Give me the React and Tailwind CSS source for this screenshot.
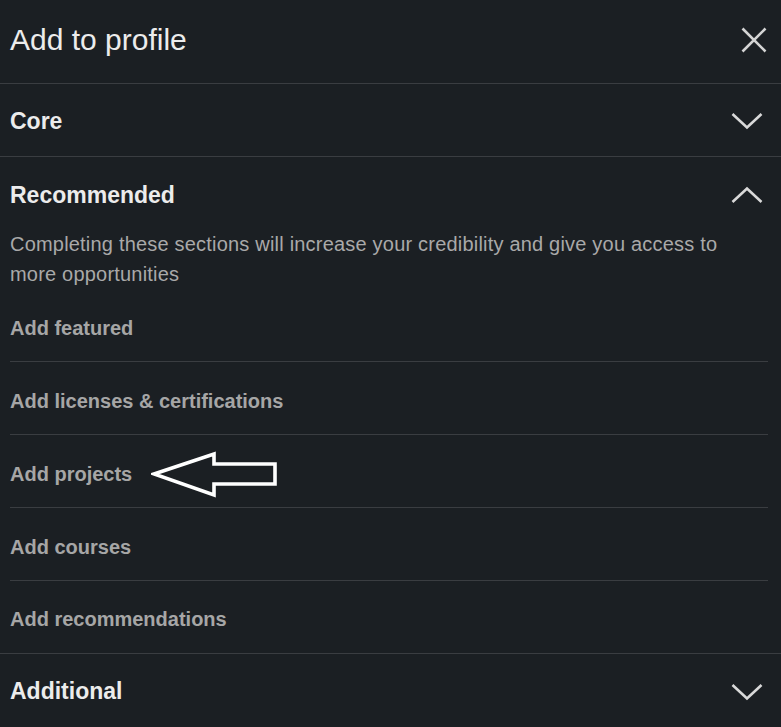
import React from "react";

const items = [
  "Add featured",
  "Add licenses & certifications",
  "Add projects",
  "Add courses",
  "Add recommendations",
];

const ChevronDown = () => (
  <svg width="32" height="18" viewBox="0 0 32 18" fill="none" stroke="#d9d9d9" strokeWidth="2.6">
    <path d="M1.5 2 L16 15.5 L30.5 2" />
  </svg>
);

const ChevronUp = () => (
  <svg width="32" height="18" viewBox="0 0 32 18" fill="none" stroke="#d9d9d9" strokeWidth="2.6">
    <path d="M1.5 16 L16 2.5 L30.5 16" />
  </svg>
);

const Arrow = () => (
  <svg
    className="absolute left-[141px] top-[16px]"
    width="130"
    height="48"
    viewBox="0 0 130 48"
    fill="none"
    stroke="#ffffff"
    strokeWidth="3.6"
    strokeLinejoin="miter"
  >
    <path d="M3 23 L63 3 L63 13 L124 13 L124 33 L63 33 L63 44 Z" />
  </svg>
);

const App = () => {
  return (
    <div
      className="w-[781px] h-[727px] overflow-hidden bg-[#1b1f23] text-[#e9e9e9]"
      style={{ fontFamily: "'Liberation Sans', Arial, sans-serif" }}
    >
      {/* Header */}
      <div className="h-[84px] flex items-center justify-between pl-[10px] pr-[14px] border-b border-[#3a3d41]">
        <h1 className="text-[30px] font-normal text-[#ececec] -mt-[4px]">Add to profile</h1>
        <svg width="26" height="26" viewBox="0 0 26 26" stroke="#d4d4d4" strokeWidth="2.6" className="-mt-[4px]">
          <path d="M1.5 1.5 L24.5 24.5 M24.5 1.5 L1.5 24.5" />
        </svg>
      </div>

      {/* Core */}
      <div className="h-[73px] pt-[2px] flex items-center justify-between pl-[10px] pr-[18px] border-b border-[#3a3d41]">
        <span className="text-[23px] font-bold text-[#ececec]">Core</span>
        <ChevronDown />
      </div>

      {/* Recommended */}
      <div className="border-b border-[#3a3d41]">
        <div className="h-[76px] flex items-center justify-between pl-[10px] pr-[18px]">
          <span className="text-[23px] font-bold text-[#ececec]">Recommended</span>
          <ChevronUp />
        </div>
        <p className="pl-[10px] pr-[30px] text-[20px] leading-[30px] text-[#a9a9a9] -mt-[4px] tracking-[0.2px]">
          Completing these sections will increase your credibility and give you access to more opportunities
        </p>
        <div className="pl-[10px] pr-[13px]">
          {items.map((item, i) => (
            <div
              key={item}
              className={`relative ${i < items.length - 1 ? "border-b border-[#3a3d41]" : ""} ${
                i === 0 ? "h-[73px] pt-[25px]" : i === items.length - 1 ? "h-[72px] pt-[24px]" : "h-[73px] pt-[25px]"
              }`}
            >
              <span className="text-[20px] leading-[28px] font-bold text-[#a6a6a6]">{item}</span>
              {item === "Add projects" && <Arrow />}
            </div>
          ))}
        </div>
      </div>

      {/* Additional */}
      <div className="h-[73px] pt-[2px] flex items-center justify-between pl-[10px] pr-[18px]">
        <span className="text-[23px] font-bold text-[#ececec]">Additional</span>
        <ChevronDown />
      </div>
    </div>
  );
};

export default App;
